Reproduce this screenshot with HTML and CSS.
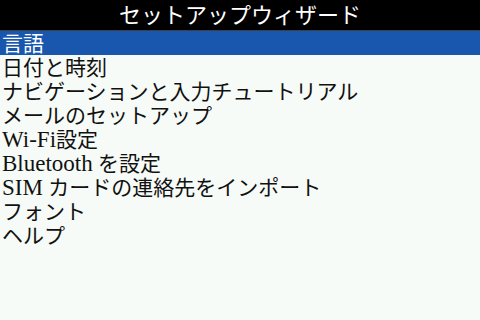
FILE: index.html
```html
<!DOCTYPE html>
<html lang="ja">
  <head>
    <meta charset="UTF-8" />
    <title>セットアップウィザード</title>
    <link rel="stylesheet" href="styles.css">
  </head>
  <body>
    <div class="title-bar">セットアップウィザード</div>
    <ul class="menu">
      <li class="selected">言語</li>
      <li>日付と時刻</li>
      <li>ナビゲーションと入力チュートリアル</li>
      <li>メールのセットアップ</li>
      <li><span class="latin">Wi-Fi</span>設定</li>
      <li><span class="latin">Bluetooth</span> を設定</li>
      <li><span class="latin">SIM</span> カードの連絡先をインポート</li>
      <li>フォント</li>
      <li>ヘルプ</li>
    </ul>
  </body>
</html>
```
FILE: styles.css
```css
* {
  margin: 0;
  padding: 0;
  box-sizing: border-box;
}
body {
  width: 480px;
  height: 320px;
  background: #f7fbf7;
  font-family: "Liberation Serif", "Noto Sans CJK JP", serif;
  overflow: hidden;
}

/* Title */
.title-bar {
  height: 31px;
  background: #000;
  border-bottom: 1px solid #3a3f48;
  color: #fff;
  font-size: 22px;
  line-height: 31px;
  text-align: center;
}

/* Menu list */
.menu {
  list-style: none;
}
.menu li {
  height: 24px;
  padding: 2px 0 0 2px;
  font-size: 21px;
  line-height: 22px;
  color: #111;
  white-space: nowrap;
}
.menu li.selected {
  background: #1857ad;
  color: #fff;
}
.menu .latin {
  font-size: 23px;
}
```
